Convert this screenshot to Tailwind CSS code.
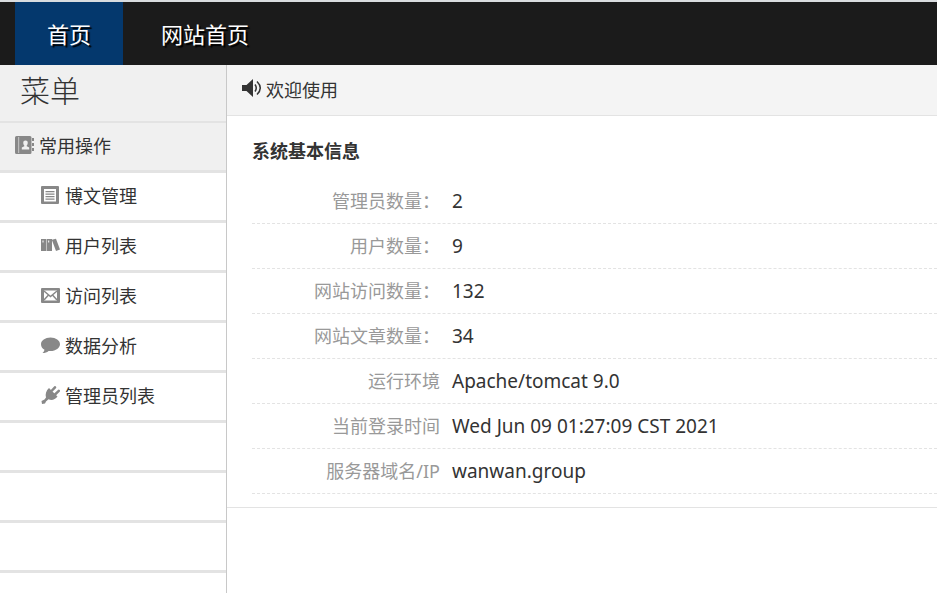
<!DOCTYPE html>
<html lang="zh-CN">
  <head>
    <meta charset="UTF-8" />
    <meta name="viewport" content="width=device-width, initial-scale=1.0" />
    <title>后台管理</title>
    <script src="https://cdn.jsdelivr.net/npm/@tailwindcss/browser@4"></script>
  </head>
  <body
    class="bg-white min-h-screen flex flex-col font-['Noto_Sans','Noto_Sans_CJK_SC',sans-serif] text-lg text-[#333]"
  >
    <header class="border-t-2 border-[#d9dcdf] bg-[#1b1b1b]">
      <nav
        class="flex pl-[15px] font-['Noto_Sans_CJK_SC',sans-serif] text-[22px] leading-[63px] text-white [text-shadow:2px_2px_1px_#000]"
      >
        <a href="#" class="bg-[#04386d] px-8">首页</a>
        <a href="#" class="px-[38px]">网站首页</a>
      </nav>
    </header>

    <div class="flex flex-1">
      <aside
        class="w-[227px] shrink-0 border-r border-[#c8c8c8] font-['Noto_Sans_CJK_SC',sans-serif]"
      >
        <h1
          class="h-[58px] border-b-2 border-[#e3e3e3] bg-[#f0f0f0] pl-5 text-[30px] leading-[48px] font-light"
        >
          菜单
        </h1>
        <ul>
          <li class="h-[50px] border-b-3 border-[#e3e3e3] bg-[#f0f0f0]">
            <a
              href="#"
              class="flex h-full items-center gap-[5px] pb-[3px] pl-[15px]"
            >
              <svg class="h-[19px] w-[19px]" viewBox="0 0 19 19" fill="#888">
                <path
                  fill-rule="evenodd"
                  d="M1.500 0H15a1.500 1.500 0 0 1 1.500 1.500V16.500A1.500 1.500 0 0 1 15 18H1.500A1.500 1.500 0 0 1 0 16.500V1.500A1.500 1.500 0 0 1 1.500 0zM3.500 1V17H4.100V1zM10.500 4.500a2.200 2.200 0 0 0-2.200 2.500c0 1.100.4 2 1 2.500v.8L6.800 11.600V13.500H14.200V11.600L11.700 10.300v-.8c.6-.5 1-1.400 1-2.500a2.200 2.200 0 0 0-2.200-2.500z"
                />
                <path d="M17 2h2v3h-2zM17 7h2v3h-2zM17 12h2v3h-2z" />
              </svg>
              常用操作
            </a>
          </li>
          <li class="h-[50px] border-b-3 border-[#e3e3e3]">
            <a
              href="#"
              class="flex h-full items-center gap-[5px] pb-[3px] pl-[41px]"
            >
              <svg class="h-[19px] w-[19px]" viewBox="0 0 19 19" fill="#888">
                <path
                  fill-rule="evenodd"
                  d="M1 0H17a1 1 0 0 1 1 1V17a1 1 0 0 1-1 1H1a1 1 0 0 1-1-1V1A1 1 0 0 1 1 0zM3 3V15.500H15V3z"
                />
                <path
                  d="M4.500 5H13.500V6.200H4.500zM4.500 7.500H13.500V8.700H4.500zM4.500 10H13.500V11.200H4.500zM4.500 12.500H13.500V13.700H4.500z"
                />
              </svg>
              博文管理
            </a>
          </li>
          <li class="h-[50px] border-b-3 border-[#e3e3e3]">
            <a
              href="#"
              class="flex h-full items-center gap-[5px] pb-[3px] pl-[41px]"
            >
              <svg class="h-[19px] w-[19px]" viewBox="0 0 19 19" fill="#888">
                <path
                  fill-rule="evenodd"
                  d="M0 3H5.200V15H0zM1.500 4.500V6.500H2.500V4.500zM5.700 3H11V15H5.700zM7.200 4.500V6.500H8.200V4.500z"
                />
                <path d="M10.800 3.800L15 2.800L19 13.500L15 15z" />
              </svg>
              用户列表
            </a>
          </li>
          <li class="h-[50px] border-b-3 border-[#e3e3e3]">
            <a
              href="#"
              class="flex h-full items-center gap-[5px] pb-[3px] pl-[41px]"
            >
              <svg class="h-[19px] w-[19px]" viewBox="0 0 19 19" fill="#888">
                <path
                  fill-rule="evenodd"
                  d="M1 2H18a1 1 0 0 1 1 1V16a1 1 0 0 1-1 1H1a1 1 0 0 1-1-1V3A1 1 0 0 1 1 2zM3 4.500V14.500H16V4.500z"
                />
                <path
                  d="M3 5L9.500 10.500L16 5M3 14L7.500 9M16 14L11.500 9"
                  fill="none"
                  stroke="#888"
                  stroke-width="1.500"
                />
              </svg>
              访问列表
            </a>
          </li>
          <li class="h-[50px] border-b-3 border-[#e3e3e3]">
            <a
              href="#"
              class="flex h-full items-center gap-[5px] pb-[3px] pl-[41px]"
            >
              <svg class="h-[19px] w-[19px]" viewBox="0 0 19 19" fill="#888">
                <path
                  d="M9.500 1.500C14.800 1.500 19 4.500 19 8.200S14.800 15 9.500 15c-.7 0-1.300 0-1.900-.1C6 16.300 4 17 1.500 17c1.100-1 1.800-2 2-3.200C1.300 12.500 0 10.500 0 8.200 0 4.500 4.200 1.500 9.500 1.500z"
                />
              </svg>
              数据分析
            </a>
          </li>
          <li class="h-[50px] border-b-3 border-[#e3e3e3]">
            <a
              href="#"
              class="flex h-full items-center gap-[5px] pb-[3px] pl-[41px]"
            >
              <svg class="h-[19px] w-[19px]" viewBox="0 0 19 19" fill="#888">
                <path
                  d="M8 2L16.500 10.500C14 13.800 10.500 14.800 7.500 13.200L5 15.500L4 17.500L1 18L.5 15L3.500 13.500L5 11.500C4 8 5.200 4.500 8 2z"
                />
                <path
                  d="M10.500 5L14 1.300M14 8.500L17.800 4.800"
                  fill="none"
                  stroke="#888"
                  stroke-width="2.500"
                  stroke-linecap="round"
                />
              </svg>
              管理员列表
            </a>
          </li>
          <li class="h-[50px] border-b-3 border-[#e3e3e3]"></li>
          <li class="h-[50px] border-b-3 border-[#e3e3e3]"></li>
          <li class="h-[50px] border-b-3 border-[#e3e3e3]"></li>
        </ul>
      </aside>

      <main class="min-w-0 flex-1">
        <div
          class="flex h-[51px] items-center gap-1 border-b border-[#e3e3e3] bg-[#f4f4f4] pb-[3px] pl-[15px] font-['Noto_Sans_CJK_SC',sans-serif]"
        >
          <svg class="h-[19px] w-5" viewBox="0 0 20 19" fill="#333">
            <path d="M0 6H4.500L11 0V18L4.500 12H0z" />
            <path
              d="M13 5.500Q15.500 9 13 12.500M15 2.500Q21.500 9 15 15.500"
              fill="none"
              stroke="#333"
              stroke-width="1.500"
            />
          </svg>
          欢迎使用
        </div>

        <section class="border-b border-[#e3e3e3] pt-[9px] pb-[13px] pl-[25px]">
          <h2
            class="pb-1 font-['Noto_Sans_CJK_SC',sans-serif] leading-[50px] font-bold"
          >
            系统基本信息
          </h2>
          <dl class="leading-[44px]">
            <div class="flex border-b border-dashed border-[#e3e3e3]">
              <dt class="w-[188px] text-right text-[#999]">管理员数量：</dt>
              <dd class="pl-3 text-[19px]">2</dd>
            </div>
            <div class="flex border-b border-dashed border-[#e3e3e3]">
              <dt class="w-[188px] text-right text-[#999]">用户数量：</dt>
              <dd class="pl-3 text-[19px]">9</dd>
            </div>
            <div class="flex border-b border-dashed border-[#e3e3e3]">
              <dt class="w-[188px] text-right text-[#999]">网站访问数量：</dt>
              <dd class="pl-3 text-[19px]">132</dd>
            </div>
            <div class="flex border-b border-dashed border-[#e3e3e3]">
              <dt class="w-[188px] text-right text-[#999]">网站文章数量：</dt>
              <dd class="pl-3 text-[19px]">34</dd>
            </div>
            <div class="flex border-b border-dashed border-[#e3e3e3]">
              <dt class="w-[188px] text-right text-[#999]">运行环境</dt>
              <dd class="pl-3 text-[19px]">Apache/tomcat 9.0</dd>
            </div>
            <div class="flex border-b border-dashed border-[#e3e3e3]">
              <dt class="w-[188px] text-right text-[#999]">当前登录时间</dt>
              <dd class="pl-3 text-[19px]">Wed Jun 09 01:27:09 CST 2021</dd>
            </div>
            <div class="flex border-b border-dashed border-[#e3e3e3]">
              <dt class="w-[188px] text-right text-[#999]">服务器域名/IP</dt>
              <dd class="pl-3 text-[19px]">wanwan.group</dd>
            </div>
          </dl>
        </section>
      </main>
    </div>
  </body>
</html>
